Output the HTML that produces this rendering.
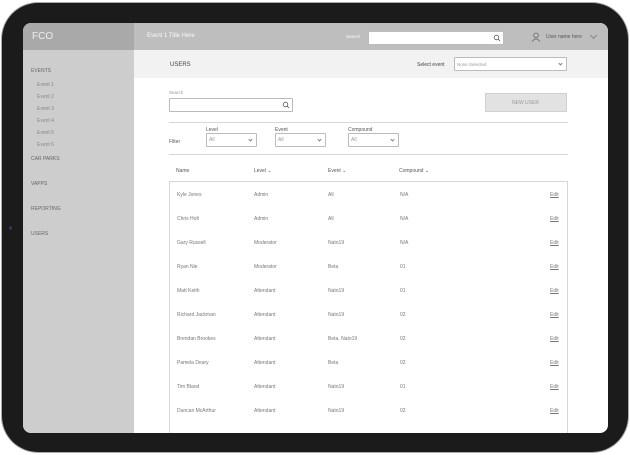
<!DOCTYPE html>
<html><head><style>
*{margin:0;padding:0;box-sizing:border-box}
body{width:630px;height:455px;background:#fff;font-family:"Liberation Sans",sans-serif;position:relative;overflow:hidden}
.a{position:absolute}
.bez{left:2px;top:3px;width:626px;height:449px;background:#1b1b1b;border-radius:36px;box-shadow:0 0 0 1px #aaa}
.scr{left:23px;top:23px;width:585px;height:410px;background:#fff;border-radius:8px;overflow:hidden}
.t{font-size:5px;color:#666;white-space:nowrap}
.box{border:1px solid #bbb;background:#fff;border-radius:1px}
.chev{width:3px;height:3px;border-right:1px solid #888;border-bottom:1px solid #888;transform:rotate(45deg)}
.row{left:146px;width:399px;height:25px;border:1px solid #d6d6d6;border-top:none;background:#fff}
.row span{position:absolute;top:10px;font-size:5px;color:#777}
</style></head><body>
<div class="a bez"></div>
<div class="a" style="left:9px;top:226px;width:3px;height:4px;background:#335;border-radius:2px"></div>
<div class="a scr">
 <div class="a" style="left:0;top:0;width:111px;height:410px;background:#cdcdcd"></div>
 <div class="a" style="left:0;top:0;width:111px;height:27px;background:#a9a9a9"></div>
 <div class="a" style="left:111px;top:0;width:474px;height:27px;background:#bebebe"></div>
 <div class="a" style="left:9px;top:8px;font-size:10px;color:#eee">FCO</div>
 <div class="a t" style="left:124px;top:10px;color:#fafafa;font-size:6px">Event 1 Title Here</div>
 <div class="a t" style="left:323px;top:11px;color:#fafafa;font-size:4.5px">Search</div>
 <div class="a box" style="left:345px;top:8px;width:136px;height:14px"></div>
 <svg class="a" style="left:470px;top:11px" width="8" height="8"><circle cx="3.5" cy="3.5" r="2.3" stroke="#555" fill="none" stroke-width=".8"/><line x1="5.2" y1="5.2" x2="7" y2="7" stroke="#555" stroke-width=".8"/></svg>
 <svg class="a" style="left:508px;top:9px" width="10" height="10"><circle cx="5" cy="3.3" r="2.3" stroke="#666" fill="none" stroke-width=".8"/><path d="M1 9.5Q5 4.5 9 9.5" stroke="#666" fill="none" stroke-width=".8"/></svg>
 <div class="a t" style="left:523px;top:11px;color:#555">User name here</div>
 <div class="a chev" style="left:568px;top:10px;width:5px;height:5px"></div>
 <div class="a" style="left:111px;top:27px;width:474px;height:28px;background:#f2f2f2"></div>
 <div class="a" style="left:147px;top:39px;font-size:6px;color:#444">USERS</div>
 <div class="a t" style="left:394px;top:39px;color:#444">Select event</div>
 <div class="a box" style="left:431px;top:34px;width:113px;height:14px"></div>
 <div class="a t" style="left:434px;top:39px;color:#999;font-size:4.5px">None Selected</div>
 <div class="a chev" style="left:536px;top:39px"></div>
 <div class="a t" style="left:8px;top:45px;color:#666">EVENTS</div>
 <div class="a t" style="left:14px;top:59px;color:#888">Event 1</div>
 <div class="a t" style="left:14px;top:71px;color:#888">Event 2</div>
 <div class="a t" style="left:14px;top:83px;color:#888">Event 3</div>
 <div class="a t" style="left:14px;top:95px;color:#888">Event 4</div>
 <div class="a t" style="left:14px;top:107px;color:#888">Event 5</div>
 <div class="a t" style="left:14px;top:119px;color:#888">Event 6</div>
 <div class="a t" style="left:8px;top:133px">CAR PARKS</div>
 <div class="a t" style="left:8px;top:158px">VAPPS</div>
 <div class="a t" style="left:8px;top:183px">REPORTING</div>
 <div class="a t" style="left:8px;top:208px">USERS</div>
 <div class="a t" style="left:146px;top:67px;color:#999;font-size:4.5px">Search</div>
 <div class="a box" style="left:146px;top:75px;width:124px;height:14px"></div>
 <svg class="a" style="left:259px;top:78px" width="8" height="8"><circle cx="3.5" cy="3.5" r="2.3" stroke="#555" fill="none" stroke-width=".8"/><line x1="5.2" y1="5.2" x2="7" y2="7" stroke="#555" stroke-width=".8"/></svg>
 <div class="a" style="left:462px;top:70px;width:82px;height:19px;background:#e2e2e2;border:1px solid #d0d0d0"></div>
 <div class="a t" style="left:489px;top:77px;color:#999">NEW USER</div>
 <div class="a" style="left:146px;top:99px;width:399px;height:1px;background:#d8d8d8"></div>
 <div class="a" style="left:146px;top:131px;width:399px;height:1px;background:#d8d8d8"></div>
 <div class="a t" style="left:146px;top:116px;color:#555">Filter</div>
 <div class="a t" style="left:183px;top:104px;color:#555">Level</div>
 <div class="a box" style="left:183px;top:110px;width:51px;height:14px"></div><div class="a t" style="left:186px;top:114px;color:#999">All</div><div class="a chev" style="left:226px;top:115px"></div>
 <div class="a t" style="left:252px;top:104px;color:#555">Event</div>
 <div class="a box" style="left:252px;top:110px;width:51px;height:14px"></div><div class="a t" style="left:255px;top:114px;color:#999">All</div><div class="a chev" style="left:295px;top:115px"></div>
 <div class="a t" style="left:325px;top:104px;color:#555">Compound</div>
 <div class="a box" style="left:325px;top:110px;width:51px;height:14px"></div><div class="a t" style="left:328px;top:114px;color:#999">All</div><div class="a chev" style="left:368px;top:115px"></div>
 <div class="a t" style="left:153px;top:145px;color:#555">Name</div>
 <div class="a t" style="left:231px;top:145px;color:#555">Level ⌄</div>
 <div class="a t" style="left:305px;top:145px;color:#555">Event ⌄</div>
 <div class="a t" style="left:376px;top:145px;color:#555">Compound ⌄</div>
 <div class="a" style="left:146px;top:158px;width:399px;height:1px;background:#d6d6d6"></div>
 <div class="a row" style="top:159px"><span style="left:7px">Kyle Jones</span><span style="left:84px">Admin</span><span style="left:158px">All</span><span style="left:230px">N/A</span><span style="left:380px;text-decoration:underline">Edit</span></div>
 <div class="a row" style="top:183px"><span style="left:7px">Chris Holt</span><span style="left:84px">Admin</span><span style="left:158px">All</span><span style="left:230px">N/A</span><span style="left:380px;text-decoration:underline">Edit</span></div>
 <div class="a row" style="top:207px"><span style="left:7px">Gary Russell</span><span style="left:84px">Moderator</span><span style="left:158px">Nato19</span><span style="left:230px">N/A</span><span style="left:380px;text-decoration:underline">Edit</span></div>
 <div class="a row" style="top:231px"><span style="left:7px">Ryan Nie</span><span style="left:84px">Moderator</span><span style="left:158px">Beta</span><span style="left:230px">01</span><span style="left:380px;text-decoration:underline">Edit</span></div>
 <div class="a row" style="top:255px"><span style="left:7px">Matt Keith</span><span style="left:84px">Attendant</span><span style="left:158px">Nato19</span><span style="left:230px">01</span><span style="left:380px;text-decoration:underline">Edit</span></div>
 <div class="a row" style="top:279px"><span style="left:7px">Richard Jackman</span><span style="left:84px">Attendant</span><span style="left:158px">Nato19</span><span style="left:230px">02</span><span style="left:380px;text-decoration:underline">Edit</span></div>
 <div class="a row" style="top:303px"><span style="left:7px">Brendan Brookes</span><span style="left:84px">Attendant</span><span style="left:158px">Beta, Nato19</span><span style="left:230px">02</span><span style="left:380px;text-decoration:underline">Edit</span></div>
 <div class="a row" style="top:327px"><span style="left:7px">Pamela Deary</span><span style="left:84px">Attendant</span><span style="left:158px">Beta</span><span style="left:230px">02</span><span style="left:380px;text-decoration:underline">Edit</span></div>
 <div class="a row" style="top:351px"><span style="left:7px">Tim Bland</span><span style="left:84px">Attendant</span><span style="left:158px">Nato19</span><span style="left:230px">01</span><span style="left:380px;text-decoration:underline">Edit</span></div>
 <div class="a row" style="top:375px"><span style="left:7px">Duncan McArthur</span><span style="left:84px">Attendant</span><span style="left:158px">Nato19</span><span style="left:230px">02</span><span style="left:380px;text-decoration:underline">Edit</span></div>
 <div class="a row" style="top:399px;height:30px"></div>
</div>
</body></html>
